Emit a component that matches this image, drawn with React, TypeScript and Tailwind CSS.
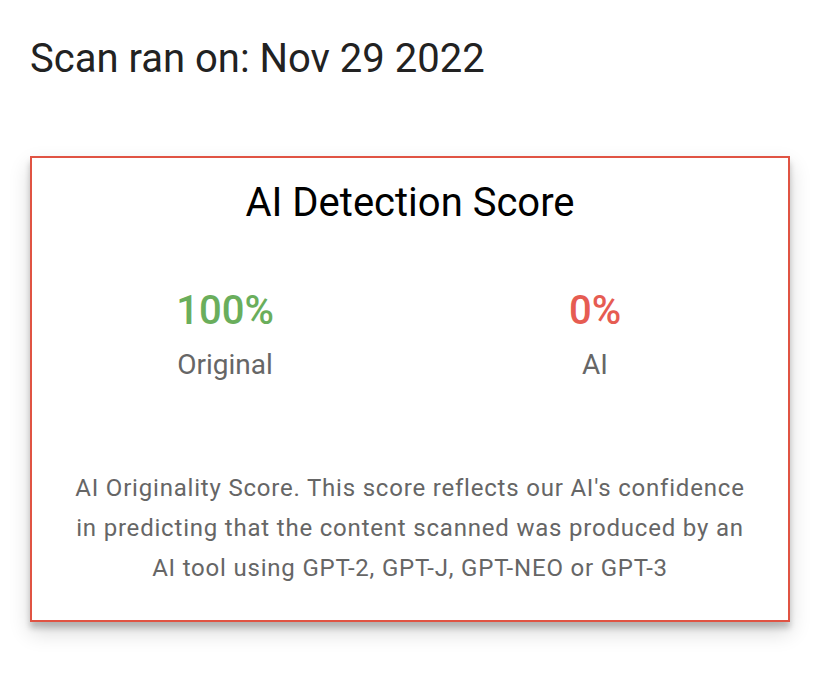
export default function App() {
  return (
    <div className="min-h-[682px] w-[824px] bg-white pl-[30px] pr-[34px] pt-[35px]" style={{ fontFamily: "Roboto, 'Liberation Sans', sans-serif" }}>
      <h1 className="text-[40px] leading-[48px] text-[#222222]">Scan ran on: Nov 29 2022</h1>
      <div className="mt-[73px] border-2 border-[#e05343] bg-white px-[8px] pt-[21px] pb-[32px] shadow-[0_10px_20px_rgba(0,0,0,0.16),0_6px_6px_rgba(0,0,0,0.2)]">
        <h2 className="text-center text-[40px] leading-[48px] text-black">AI Detection Score</h2>
        <div className="mt-[60px] grid grid-cols-2">
          <div className="flex flex-col items-center">
            <div className="text-[40px] font-medium leading-[48px] text-[#6aae5c]">100%</div>
            <div className="mt-[10px] text-[28px] leading-[40px] text-[#666666]">Original</div>
          </div>
          <div className="flex flex-col items-center">
            <div className="text-[40px] font-medium leading-[48px] text-[#e65c52]">0%</div>
            <div className="mt-[10px] text-[28px] leading-[40px] text-[#666666]">AI</div>
          </div>
        </div>
        <p className="mx-auto mt-[83px] max-w-[690px] text-center text-[24px] leading-[40px] tracking-[0.8px] text-[#666666]">
          AI Originality Score. This score reflects our AI's confidence in predicting that the content scanned was produced by an AI tool using GPT-2, GPT-J, GPT-NEO or GPT-3
        </p>
      </div>
    </div>
  );
}
